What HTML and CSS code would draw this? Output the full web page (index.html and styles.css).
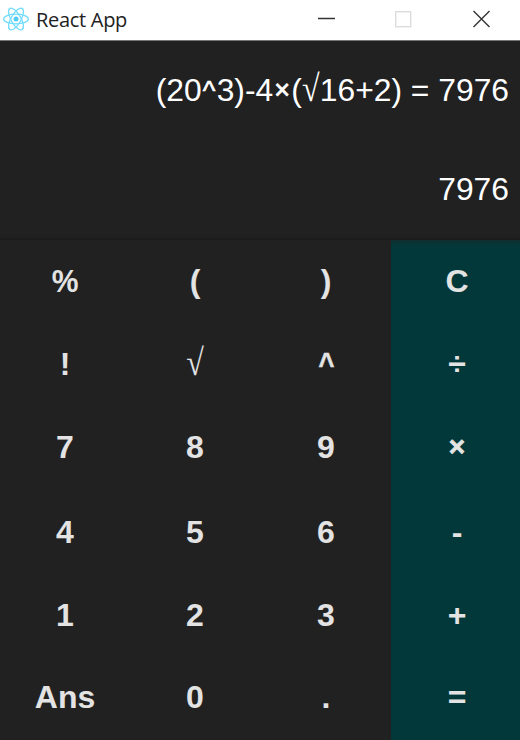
FILE: index.html
```html
<!DOCTYPE html>
<html lang="en">
<head>
<meta charset="utf-8">
<title>React App</title>
<link rel="stylesheet" href="styles.css">
</head>
<body>
<div class="window">
  <header class="titlebar">
    <svg class="logo" width="28" height="26" viewBox="-14 -13 28 26">
      <g fill="none" stroke="#73dcfb" stroke-width="1.3">
        <ellipse rx="12.4" ry="4.9"/>
        <ellipse rx="12.2" ry="4.9" transform="rotate(60)"/>
        <ellipse rx="12.2" ry="4.9" transform="rotate(120)"/>
      </g>
      <circle r="2.5" fill="#4fcdf5"/>
    </svg>
    <span class="title">React App</span>
    <svg class="controls" width="174" height="20" viewBox="0 0 174 20" fill="none">
      <path d="M0 9.5h17" stroke="#333" stroke-width="1.5"/>
      <rect x="77.7" y="2.7" width="15" height="15" stroke="#dcdcdc" stroke-width="1.4"/>
      <path d="M155.5 2l16 16M171.5 2l-16 16" stroke="#333" stroke-width="1.4"/>
    </svg>
  </header>
  <section class="display">
    <div class="line">(20<span class="caret">^</span>3)-4<span class="times">×</span>(<span class="root">√</span>16+2) = 7976</div>
    <div class="line">7976</div>
  </section>
  <main class="keys">
    <button><span class="percent">%</span></button><button>(</button><button>)</button><button class="op first">C</button>
    <button>!</button><button><span class="radical">√</span></button><button><span class="power">^</span></button><button class="op">÷</button>
    <button>7</button><button>8</button><button>9</button><button class="op"><span class="multiply">×</span></button>
    <button>4</button><button>5</button><button>6</button><button class="op">-</button>
    <button>1</button><button>2</button><button>3</button><button class="op">+</button>
    <button>Ans</button><button>0</button><button>.</button><button class="op">=</button>
  </main>
</div>
</body>
</html>
```
FILE: styles.css
```css
* { box-sizing: border-box; }
body { margin: 0; background: #212121; font-family: "Liberation Sans", Arial, sans-serif; }
.window { width: 520px; height: 740px; overflow: hidden; display: flex; flex-direction: column; }
.titlebar { height: 41px; flex: none; display: flex; align-items: center; padding: 0 28px 2px 2px; background: #fff; border-bottom: 1px solid #777; }
.logo { flex: none; }
.title { margin-left: 6px; padding-top: 1px; font: 20px/26px "Open Sans", "Noto Sans", sans-serif; color: #222; white-space: nowrap; letter-spacing: -0.3px; }
.controls { margin-left: auto; }
.display { height: 199px; flex: none; padding: 0 11px; color: #fff; font-size: 31.8px; text-align: right; }
.line { height: 99px; line-height: 99px; white-space: nowrap; }
.caret, .times, .root, .keys span { display: inline-block; line-height: 1; text-align: center; }
.caret { width: 15px; font-size: 27px; -webkit-text-stroke: 0.6px #fff; transform: translateY(-1px); }
.times { width: 18px; font-size: 27px; -webkit-text-stroke: 0.8px #fff; transform: translateY(-2px); }
.root { width: 18px; font-family: "Liberation Serif", serif; font-size: 32px; transform: translateY(-2px) scaleY(1.17); }
.keys { flex: 1; width: 522px; display: grid; grid-template-columns: 129px repeat(3, 131px); grid-template-rows: 84px 82px 84px 86px 80px 84px; box-shadow: 0 0 4px rgba(0, 0, 0, 0.5); }
.keys button { margin: 0; padding: 0 0 2px 1px; border: 0; background: #212121; color: #e3e3e3; font: bold 32px "Liberation Sans", Arial, sans-serif; }
.keys .percent { transform: scaleX(0.94); }
.keys .radical { font-family: "Liberation Serif", serif; font-weight: normal; transform: translateY(-2px) scaleY(1.17); }
.keys .power { transform: scaleX(0.85); -webkit-text-stroke: 0.6px #e3e3e3; }
.keys .op { background: #02383a; }
.keys .multiply { font-size: 28px; -webkit-text-stroke: 0.7px #e3e3e3; transform: translateY(-2px); }
.keys .first { background: linear-gradient(#102e30, #02383a 6px); }
```
